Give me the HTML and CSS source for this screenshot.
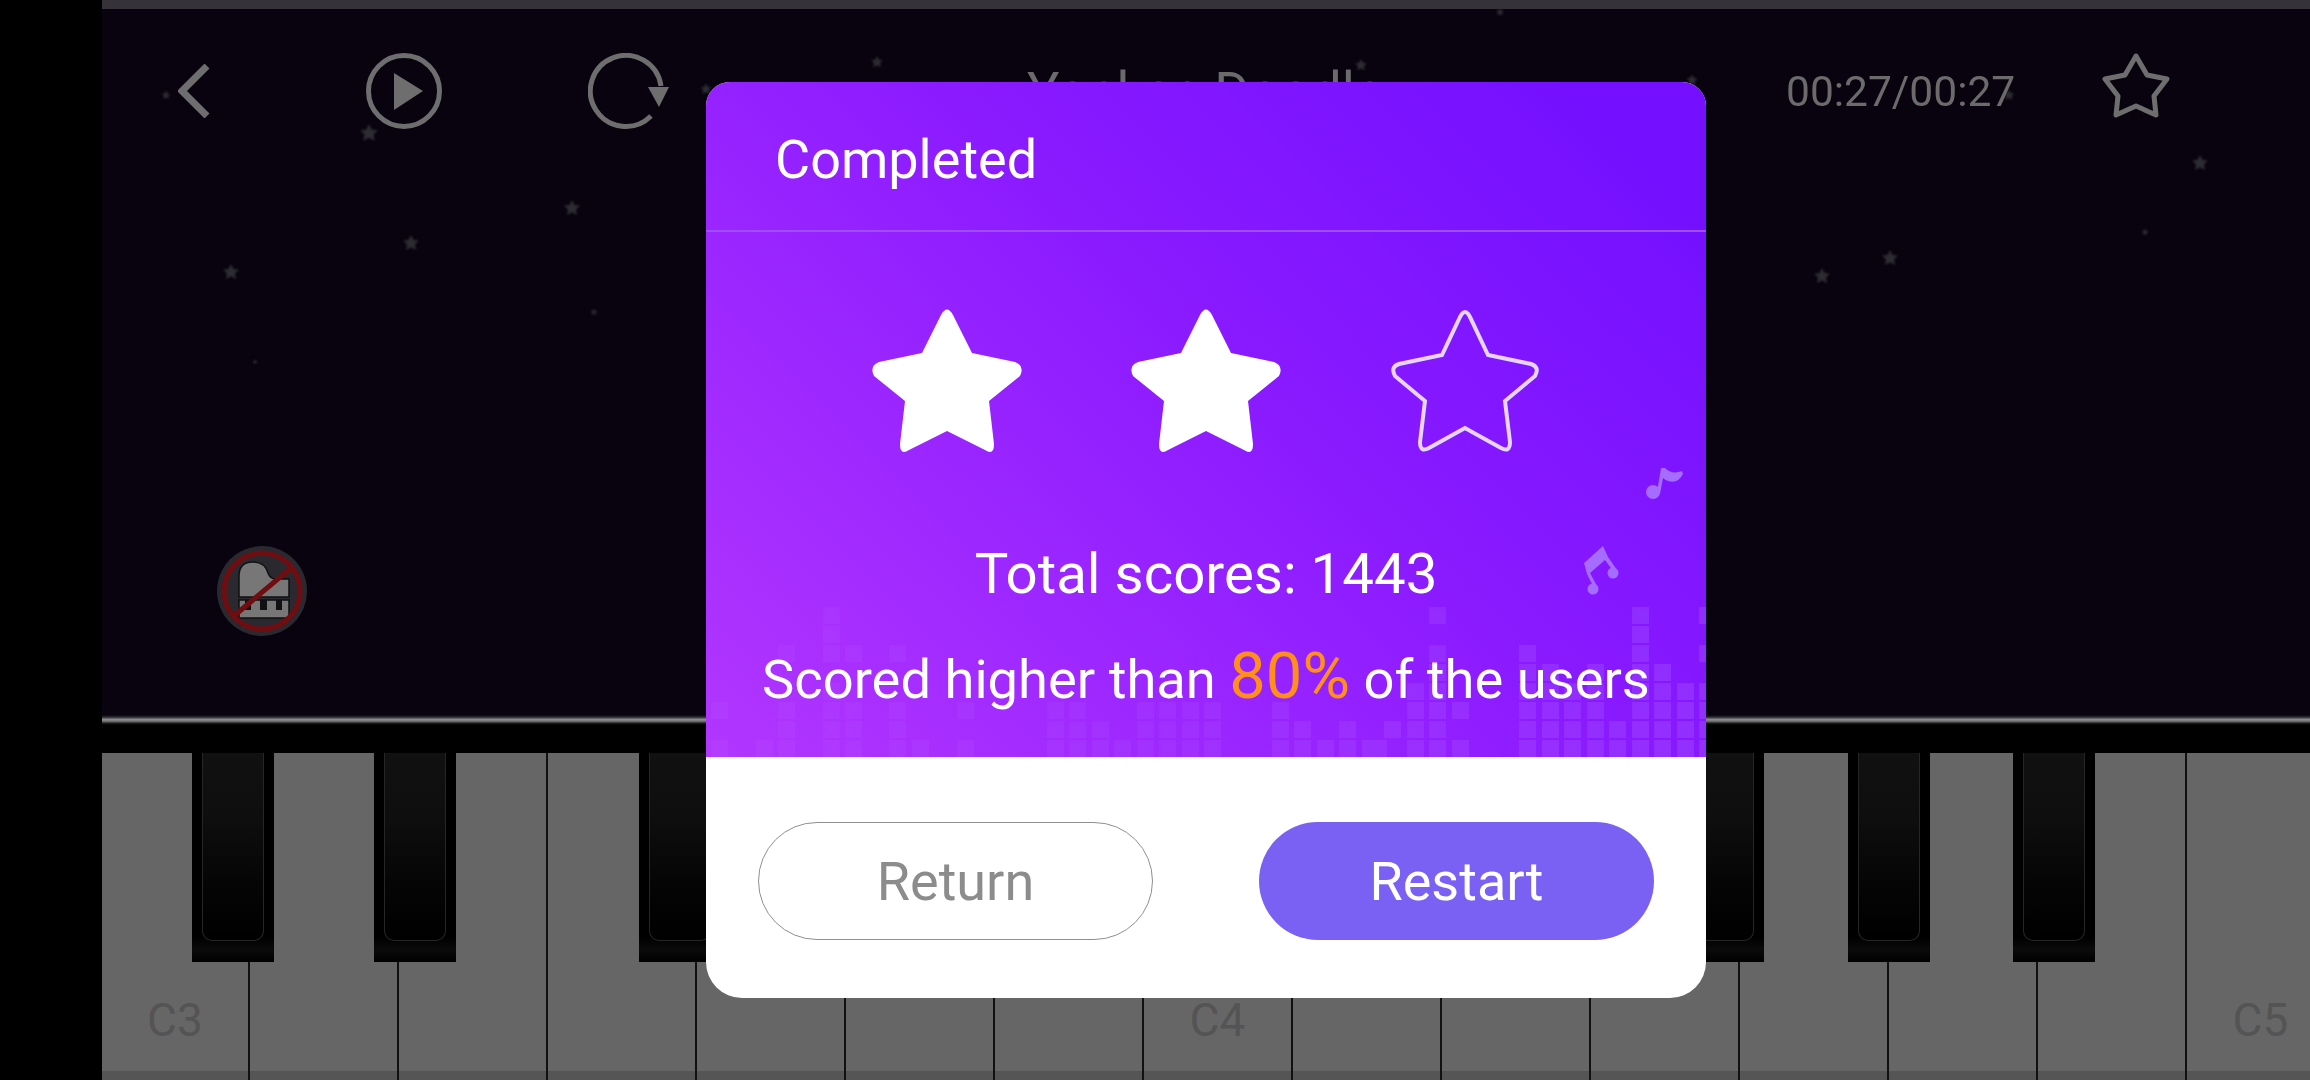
FILE: index.html
```html
<!DOCTYPE html>
<html lang="en">
<head>
  <meta charset="UTF-8">
  <title>Piano Game - Completed</title>
  <link rel="stylesheet" href="styles.css">
</head>
<body>

  <div class="screen">
    <div class="side-bar"></div>

    <div class="game">
      <div class="top-edge"></div>

      <section class="stage">
        <!-- faint stars behind the controls -->
        <svg class="sky" width="2208" height="706" viewBox="102 9 2208 706">
          <defs>
            <polygon id="spark" points="0,-10 3.2,-3.6 10,-3 5,1.8 6.4,9 0,5.4 -6.4,9 -5,1.8 -10,-3 -3.2,-3.6"/>
          </defs>
          <g class="sky-stars">
            <use href="#spark" transform="translate(166 95) scale(.45)"/>
            <use href="#spark" transform="translate(369 133) scale(.9)"/>
            <use href="#spark" transform="translate(572 208) scale(.8)"/>
            <use href="#spark" transform="translate(411 243) scale(.8)"/>
            <use href="#spark" transform="translate(231 272) scale(.8)"/>
            <use href="#spark" transform="translate(594 312) scale(.35)"/>
            <use href="#spark" transform="translate(255 362) scale(.25)"/>
            <use href="#spark" transform="translate(706 89) scale(.55)"/>
            <use href="#spark" transform="translate(877 62) scale(.6)"/>
            <use href="#spark" transform="translate(1361 65) scale(.6)"/>
            <use href="#spark" transform="translate(1500 12) scale(.4)"/>
            <use href="#spark" transform="translate(1692 80) scale(.55)"/>
            <use href="#spark" transform="translate(2009 95) scale(.55)"/>
            <use href="#spark" transform="translate(2200 163) scale(.8)"/>
            <use href="#spark" transform="translate(2145 232) scale(.35)"/>
            <use href="#spark" transform="translate(1890 258) scale(.8)"/>
            <use href="#spark" transform="translate(1822 276) scale(.8)"/>
          </g>
        </svg>

        <div class="controls">
          <svg class="icon-back" width="32" height="54" viewBox="0 0 32 54">
            <path d="M29 2 L4 27 L29 52" fill="none" stroke="#6e6e6e" stroke-width="7"/>
          </svg>
          <svg class="icon-play" width="76" height="76" viewBox="0 0 76 76">
            <circle cx="38" cy="38" r="35.5" fill="none" stroke="#6e6e6e" stroke-width="5"/>
            <polygon points="28,20 57,38 28,57" fill="#6e6e6e"/>
          </svg>
          <svg class="icon-replay" width="81" height="76" viewBox="0 0 81 76">
            <path d="M63 63 A35.5 35.5 0 1 1 73 33" fill="none" stroke="#6e6e6e" stroke-width="5"/>
            <polygon points="60,34 81,34 71,54" fill="#6e6e6e"/>
          </svg>
          <span class="song-title">Yankee Doodle</span>
          <span class="song-time">00:27/00:27</span>
          <svg class="icon-fav" width="70" height="66" viewBox="0 0 70 66">
            <path d="M35 3 L46 22 L66 26 L53 43 L55 62 L35 53 L15 62 L17 43 L4 26 L24 22 Z" fill="none" stroke="#6e6e6e" stroke-width="5" stroke-linejoin="round"/>
          </svg>
        </div>

        <svg class="no-piano" width="90" height="90" viewBox="-45 -45 90 90">
          <circle r="45" fill="#2b2930"/>
          <path d="M-23 6 V-15 Q-23 -29 -9 -29 Q3 -29 6 -18 Q8 -12 14 -12 H27 V6 Z" fill="#777" stroke="#111" stroke-width="1.5"/>
          <rect x="-23" y="9" width="50" height="18" fill="#777" stroke="#111" stroke-width="1.5"/>
          <path d="M-17 9 h6 v10 h-6 z M-2 9 h7 v10 h-7 z M14 9 h6 v10 h-6 z" fill="#111"/>
          <circle r="38" fill="none" stroke="#6f0d10" stroke-width="5"/>
          <path d="M-27 24 L29 -23" stroke="#6f0d10" stroke-width="5"/>
        </svg>
      </section>

      <div class="rail"></div>
      <div class="key-gap"></div>

      <section class="keyboard">
        <div class="white-key"><span>C3</span></div>
        <div class="white-key"></div>
        <div class="white-key"></div>
        <div class="white-key"></div>
        <div class="white-key"></div>
        <div class="white-key"></div>
        <div class="white-key"></div>
        <div class="white-key"><span>C4</span></div>
        <div class="white-key"></div>
        <div class="white-key"></div>
        <div class="white-key"></div>
        <div class="white-key"></div>
        <div class="white-key"></div>
        <div class="white-key"></div>
        <div class="white-key"><span>C5</span></div>

        <div class="black-key bk-1"><i></i></div>
        <div class="black-key bk-2"><i></i></div>
        <div class="black-key bk-3"><i></i></div>
        <div class="black-key bk-4"><i></i></div>
        <div class="black-key bk-5"><i></i></div>
        <div class="black-key bk-6"><i></i></div>
      </section>
    </div>
  </div>

  <div class="result-box">
    <div class="result-head">
      <!-- equalizer blocks and notes painted on the purple -->
      <svg class="result-art" width="1000" height="675" viewBox="0 0 1000 675">
        <defs>
          <linearGradient id="eqFade" gradientUnits="userSpaceOnUse" x1="0" y1="0" x2="1000" y2="0">
            <stop offset="0" stop-color="#fff" stop-opacity=".03"/>
            <stop offset=".45" stop-color="#fff" stop-opacity=".04"/>
            <stop offset="1" stop-color="#fff" stop-opacity=".1"/>
          </linearGradient>
        </defs>
        <path fill="none" stroke="url(#eqFade)" stroke-width="17" stroke-dasharray="17 2"
          d="M13.5 675V658M13.5 637V620M58.5 675V658M80.5 675V620M80.5 580V563M125.5 675V601M125.5 580V525
             M147.5 675V620M147.5 580V563M191.5 675V620M191.5 580V563M214.5 675V658M259.5 675V658M259.5 637V620
             M349.5 675V620M371.5 675V620M394.5 675V639M416.5 675V658M439.5 675V620M461.5 675V620M484.5 675V620
             M506.5 675V620M574.5 675V620M596.5 675V639M619.5 675V658M641.5 675V639M664.5 675V658M672.5 675V658
             M686.5 656V639M709.5 675V601M731.5 675V563M731.5 542V525M754.5 675V658M754.5 637V620
             M821.5 675V563M844.5 675V582M866.5 675V601M889.5 675V582M911.5 675V639M934.5 675V525M956.5 675V582
             M979.5 675V601M1001.5 675V601M1001.5 580V563M1001.5 542V525"/>
        <g fill="#a66cff">
          <ellipse cx="947" cy="410" rx="7" ry="7"/>
          <path d="M951 410 L955 386 L959 386 Q966 393 976 389 L977 392 Q972 402 962 399 Q959 398 957 396 L954 412 Z"/>
          <circle cx="887" cy="507" r="5.5"/>
          <circle cx="907" cy="491" r="5.5"/>
          <path d="M878 481 L897 464 L902 475 L911 488 L908 490 L899 478 L884 491 L891 504 L888 506 L881 492 Z"/>
        </g>
      </svg>

      <h2 class="result-title">Completed</h2>

      <div class="result-stars">
        <svg width="160" height="152" viewBox="-80 -4 160 152"><path class="star-shape full" d="M-6 6 Q0 -5 6 6 L25 44 L68 53 Q78 57 73 67 L42 92 L47 135 Q47 147 38 141 L0 122 L-38 141 Q-47 147 -47 135 L-42 92 L-73 67 Q-78 57 -68 53 L-25 44 Z"/></svg>
        <svg width="160" height="152" viewBox="-80 -4 160 152"><path class="star-shape full" d="M-6 6 Q0 -5 6 6 L25 44 L68 53 Q78 57 73 67 L42 92 L47 135 Q47 147 38 141 L0 122 L-38 141 Q-47 147 -47 135 L-42 92 L-73 67 Q-78 57 -68 53 L-25 44 Z"/></svg>
        <svg width="160" height="152" viewBox="-80 -4 160 152"><path class="star-shape empty" d="M-5 8 Q0 -2 5 8 L23 46 L66 55 Q75 58 70 67 L40 92 L45 133 Q45 144 36 139 L0 119 L-36 139 Q-45 144 -45 133 L-40 92 L-70 67 Q-75 58 -66 55 L-23 46 Z"/></svg>
      </div>

      <p class="total-score">Total scores: 1443</p>
      <p class="rank-line">Scored higher than <span class="rank-value">80%</span> of the users</p>
    </div>

    <div class="result-foot">
      <button class="btn-return">Return</button>
      <button class="btn-restart">Restart</button>
    </div>
  </div>

</body>
</html>
```

FILE: styles.css
```css
* {
  box-sizing: border-box;
  margin: 0;
  padding: 0;
}

body {
  width: 2310px;
  height: 1080px;
  overflow: hidden;
  position: relative;
  background-color: #000;
  font-family: 'Roboto', 'Liberation Sans', sans-serif;
}

.screen {
  display: flex;
  height: 1080px;
}

.side-bar {
  width: 102px;
  flex-shrink: 0;
  background-color: #000;
}

.game {
  flex: 1;
  min-width: 0;
  display: flex;
  flex-direction: column;
}

.top-edge {
  height: 9px;
  background-color: #35323a;
}

.stage {
  height: 706px;
  position: relative;
  background-color: #08030f;
}

.sky {
  position: absolute;
  top: 0;
  left: 0;
}

.sky-stars {
  fill: #2e2c33;
  filter: blur(0.8px);
}

.controls {
  position: relative;
  display: flex;
  align-items: center;
  height: 164px;
  color: #6b6b6b;
}

.icon-back {
  margin-left: 76px;
}

.icon-play {
  margin-left: 156px;
}

.icon-replay {
  margin-left: 146px;
}

.song-title {
  margin-left: 358px;
  width: 759px;
  font-size: 54px;
  white-space: nowrap;
}

.song-time {
  font-size: 42.5px;
  width: 315px;
}

.icon-fav {
  margin-bottom: 11px;
}

.no-piano {
  position: absolute;
  left: 115px;
  top: 537px;
}

.rail {
  height: 10px;
  background: linear-gradient(#08030f 0, #2a2730 20%, #8a8a8a 45%, #7a7a7a 60%, #161616 85%, #000 100%);
}

.key-gap {
  height: 28px;
  background-color: #000;
}

.keyboard {
  flex: 1;
  display: flex;
  position: relative;
  overflow: hidden;
}

.white-key {
  width: 149px;
  flex-shrink: 0;
  display: flex;
  align-items: flex-end;
  justify-content: center;
  padding-bottom: 33px;
  border-right: 2px solid #111;
  background: linear-gradient(#666 318px, #555 318px);
  color: #545454;
  font-size: 46px;
}

.white-key:first-child {
  width: 148px;
}

.black-key {
  position: absolute;
  top: 0;
  width: 82px;
  height: 209px;
  padding: 0 10px;
  background: linear-gradient(#000 88%, #0b0b0b 94%, #000 100%);
}

.black-key i {
  display: block;
  height: 188px;
  border: 1px solid #262626;
  border-top: none;
  border-radius: 0 0 10px 10px;
  background: linear-gradient(#111 0, #0e0e0e 35%, #050505 70%, #000 100%);
}

.bk-1 { left: 90px; }
.bk-2 { left: 272px; }
.bk-3 { left: 537px; }
.bk-4 { left: 1580px; }
.bk-5 { left: 1746px; }
.bk-6 { left: 1911px; }

/* result dialog, sits over the game */
.result-box {
  position: absolute;
  left: 706px;
  top: 82px;
  width: 1000px;
  height: 916px;
  border-radius: 24px 24px 36px 36px;
  overflow: hidden;
  background-color: #fff;
}

.result-head {
  position: relative;
  height: 675px;
  background: linear-gradient(225deg, #7410ff 8%, #8a1aff 45%, #b236ff 100%);
  color: #fff;
}

.result-art {
  position: absolute;
  left: 0;
  top: 0;
}

.result-title {
  position: relative;
  height: 150px;
  padding: 6px 0 0 69px;
  display: flex;
  align-items: center;
  font-size: 54px;
  font-weight: 400;
  border-bottom: 2px solid #a04cff;
}

.result-stars {
  position: relative;
  display: flex;
  justify-content: center;
  gap: 99px;
  margin-top: 73px;
  height: 147px;
}

.star-shape.full {
  fill: #fff;
}

.star-shape.empty {
  fill: none;
  stroke: #e8d5ff;
  stroke-width: 4;
}

.total-score {
  position: relative;
  margin-top: 87px;
  height: 70px;
  line-height: 70px;
  text-align: center;
  font-size: 56.4px;
}

.rank-line {
  position: relative;
  margin-top: 32px;
  height: 70px;
  line-height: 70px;
  text-align: center;
  font-size: 54.3px;
  white-space: nowrap;
}

.rank-value {
  color: #ff8f1a;
  font-size: 65px;
}

.result-foot {
  display: flex;
  gap: 106px;
  padding: 65px 0 0 52px;
}

.result-foot button {
  width: 395px;
  height: 118px;
  border-radius: 59px;
  font-family: inherit;
  font-size: 54px;
}

.btn-return {
  background-color: #fff;
  border: 1px solid #8f8f8f;
  color: #8c8c8c;
}

.btn-restart {
  background-color: #7b61f3;
  border: none;
  color: #fff;
}
```
